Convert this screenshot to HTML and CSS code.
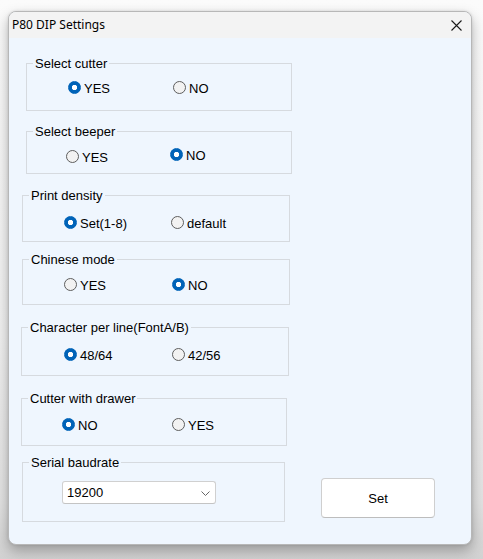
FILE: index.html
```html
<!DOCTYPE html>
<html lang="en">
<head>
<meta charset="utf-8">
<title>P80 DIP Settings</title>
<link rel="stylesheet" href="styles.css">
</head>
<body>
<div class="window">
  <div class="titlebar">
    <span class="title">P80 DIP Settings</span>
    <svg class="close" width="11" height="11" viewBox="0 0 11 11" aria-hidden="true">
      <path d="M0.5 0.5 L10.5 10.5 M10.5 0.5 L0.5 10.5" stroke="#1a1a1a" stroke-width="1.1" fill="none"/>
    </svg>
  </div>
  <div class="content">
    <div class="groups">
      <fieldset class="group g1">
        <legend>Select cutter</legend>
        <div class="options">
          <label class="opt"><input type="radio" name="cutter" checked><span>YES</span></label>
          <label class="opt"><input type="radio" name="cutter"><span>NO</span></label>
        </div>
      </fieldset>
      <fieldset class="group g2">
        <legend>Select beeper</legend>
        <div class="options">
          <label class="opt low"><input type="radio" name="beeper"><span>YES</span></label>
          <label class="opt high"><input type="radio" name="beeper" checked><span>NO</span></label>
        </div>
      </fieldset>
      <fieldset class="group g3">
        <legend>Print density</legend>
        <div class="options">
          <label class="opt"><input type="radio" name="density" checked><span>Set(1-8)</span></label>
          <label class="opt"><input type="radio" name="density"><span>default</span></label>
        </div>
      </fieldset>
      <fieldset class="group g4">
        <legend>Chinese mode</legend>
        <div class="options">
          <label class="opt"><input type="radio" name="chinese"><span>YES</span></label>
          <label class="opt"><input type="radio" name="chinese" checked><span>NO</span></label>
        </div>
      </fieldset>
      <fieldset class="group g5">
        <legend>Character per line(FontA/B)</legend>
        <div class="options">
          <label class="opt"><input type="radio" name="cpl" checked><span>48/64</span></label>
          <label class="opt"><input type="radio" name="cpl"><span>42/56</span></label>
        </div>
      </fieldset>
      <fieldset class="group g6">
        <legend>Cutter with drawer</legend>
        <div class="options">
          <label class="opt"><input type="radio" name="drawer" checked><span>NO</span></label>
          <label class="opt"><input type="radio" name="drawer"><span>YES</span></label>
        </div>
      </fieldset>
      <fieldset class="group g7">
        <legend>Serial baudrate</legend>
        <div class="combo">
          <span class="combo-value">19200</span>
          <svg class="chev" width="9" height="5" viewBox="0 0 9 5" aria-hidden="true">
            <path d="M0.5 0.5 L4.5 4.5 L8.5 0.5" stroke="#666" stroke-width="1" fill="none"/>
          </svg>
        </div>
      </fieldset>
    </div>
    <div class="side">
      <button class="set" type="button">Set</button>
    </div>
  </div>
</div>
</body>
</html>
```

FILE: styles.css
```css
html, body {
  margin: 0;
  padding: 0;
}

body {
  width: 483px;
  height: 559px;
  overflow: hidden;
  background: linear-gradient(to bottom, #fbfbfb 0%, #f1f1f1 60%, #e2e2e2 90%, #d2d2d2 100%);
  font-family: "Liberation Sans", Arial, sans-serif;
  font-size: 13px;
  color: #000;
}

.window {
  box-sizing: border-box;
  margin: 11px 0 0 8px;
  width: 464px;
  height: 534px;
  border: 1px solid #b7b7b7;
  border-radius: 8px;
  overflow: hidden;
  display: flex;
  flex-direction: column;
  background: #eff6fe;
  box-shadow: 0 6px 14px rgba(0, 0, 0, 0.28), 0 0 3px rgba(0, 0, 0, 0.12);
}

.titlebar {
  height: 25px;
  flex: none;
  background: #f3f3f3;
  display: flex;
  align-items: center;
  justify-content: space-between;
  padding: 0 9px 1px 3px;
}

.title {
  font-family: "Segoe UI", "Noto Sans", "Open Sans", sans-serif;
  font-size: 12px;
  line-height: 16px;
  color: #000;
}

.close {
  display: block;
  margin-top: 1px;
}

.content {
  flex: 1;
  display: flex;
}

.groups {
  width: 282px;
  flex: none;
  display: flex;
  flex-direction: column;
}

.group {
  box-sizing: border-box;
  margin: 0;
  padding: var(--pt, 10px) 0 0 0;
  border: 1px solid #d6dadf;
  min-width: 0;
}

.group legend {
  margin-left: 6px;
  padding: 0 2px;
  line-height: 15px;
}

.g1 { margin: 18px 0 0 17px; width: 266px; height: 55px; --pt: 10px; --pl: 41px; --w: 105px; }
.g2 { margin: 13px 0 0 17px; width: 266px; height: 50px; --pt: 10px; --pl: 39px; --w: 104px; }
.g3 { margin: 14px 0 0 13px; width: 268px; height: 54px; --pt: 13px; --pl: 41px; --w: 107px; }
.g4 { margin: 10px 0 0 13px; width: 268px; height: 53px; --pt: 11px; --pl: 41px; --w: 108px; }
.g5 { margin: 15px 0 0 12px; width: 268px; height: 56px; --pt: 13px; --pl: 42px; --w: 108px; }
.g6 { margin: 15px 0 0 12px; width: 266px; height: 55px; --pt: 12px; --pl: 40px; --w: 110px; }
.g7 { margin: 9px 0 0 13px; width: 263px; height: 67px; --pt: 11px; }

.options {
  display: flex;
  padding-left: var(--pl);
}

.opt {
  display: flex;
  align-items: flex-start;
  line-height: 15px;
}

.opt:first-child {
  width: var(--w);
}

.opt.low { margin-top: 1px; }
.opt.high { margin-top: -1px; }

.opt input {
  appearance: none;
  -webkit-appearance: none;
  box-sizing: border-box;
  width: 13px;
  height: 13px;
  margin: 0 3px 0 0;
  border-radius: 50%;
  border: 1px solid #5e5e5e;
  background: #f2f2f2;
  flex: none;
}

.opt input:checked {
  border-color: #0063b8;
  background: radial-gradient(circle, #ffffff 0 2.3px, #0063b8 3px);
}

.combo {
  box-sizing: border-box;
  margin-left: 39px;
  width: 154px;
  height: 23px;
  background: #ffffff;
  border: 1px solid #d0d0d0;
  border-bottom-color: #c4c4c4;
  border-radius: 3px;
  display: flex;
  align-items: center;
  justify-content: space-between;
  padding: 0 5px 0 4px;
  line-height: 15px;
}

.chev {
  display: block;
  margin-top: 1px;
}

.side {
  flex: 1;
  display: flex;
  flex-direction: column;
  justify-content: flex-end;
  align-items: flex-start;
}

.set {
  box-sizing: border-box;
  margin: 0 0 26px 30px;
  width: 114px;
  height: 40px;
  background: #ffffff;
  border: 1px solid #cfcfcf;
  border-bottom-color: #bdbdbd;
  border-radius: 4px;
  font-family: "Liberation Sans", Arial, sans-serif;
  font-size: 13px;
  color: #000;
  padding: 0;
}
```
